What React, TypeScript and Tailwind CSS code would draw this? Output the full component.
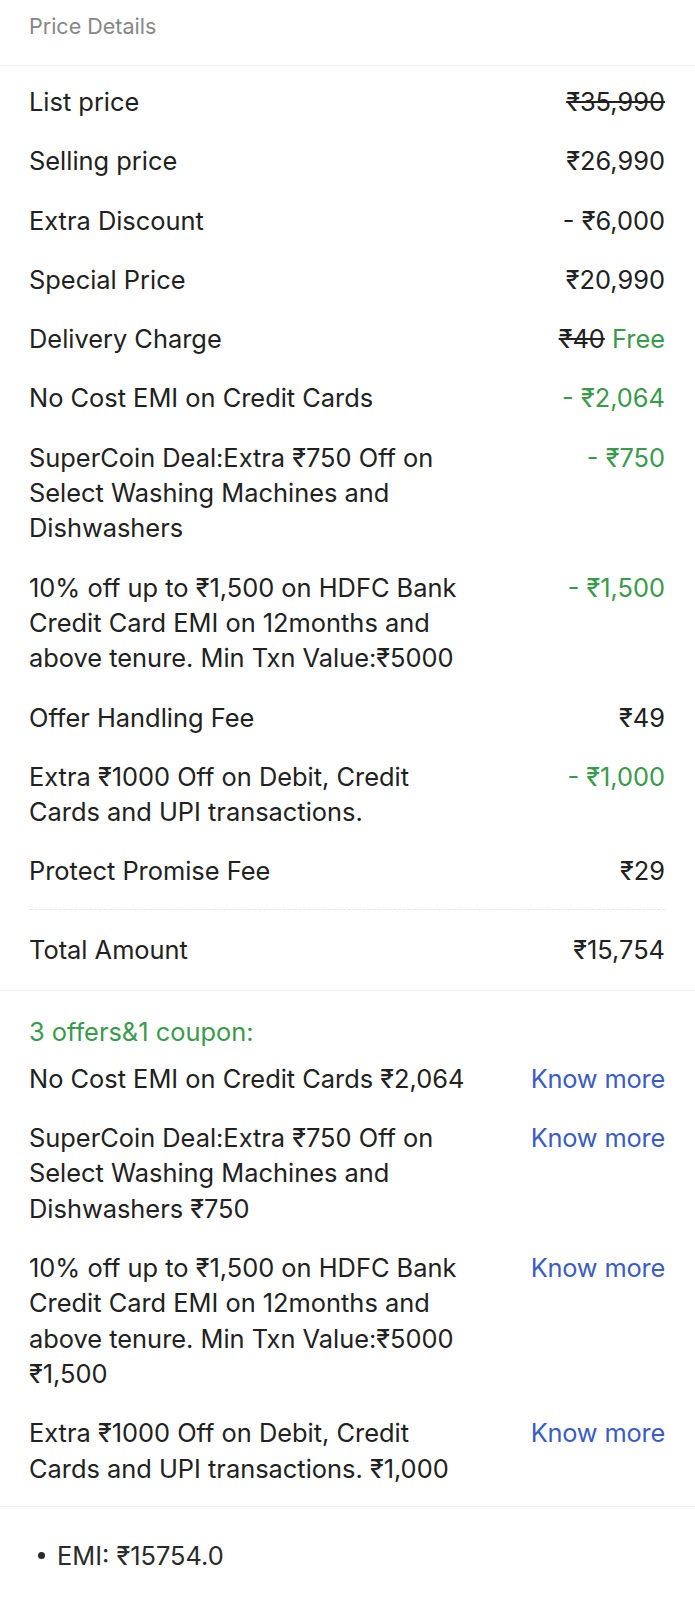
import React from "react";

type Row = { label: string; value: React.ReactNode };

const G = "text-[#3a9a4c]";

const rows: Row[] = [
  { label: "List price", value: <span className="line-through">₹35,990</span> },
  { label: "Selling price", value: "₹26,990" },
  { label: "Extra Discount", value: "- ₹6,000" },
  { label: "Special Price", value: "₹20,990" },
  {
    label: "Delivery Charge",
    value: (
      <span>
        <span className="line-through">₹40</span> <span className={G}>Free</span>
      </span>
    ),
  },
  { label: "No Cost EMI on Credit Cards", value: <span className={G}>- ₹2,064</span> },
  {
    label: "SuperCoin Deal:Extra ₹750 Off on Select Washing Machines and Dishwashers",
    value: <span className={G}>- ₹750</span>,
  },
  {
    label: "10% off up to ₹1,500 on HDFC Bank Credit Card EMI on 12months and above tenure. Min Txn Value:₹5000",
    value: <span className={G}>- ₹1,500</span>,
  },
  { label: "Offer Handling Fee", value: "₹49" },
  {
    label: "Extra ₹1000 Off on Debit, Credit Cards and UPI transactions.",
    value: <span className={G}>- ₹1,000</span>,
  },
  { label: "Protect Promise Fee", value: "₹29" },
];

const offers = [
  "No Cost EMI on Credit Cards ₹2,064",
  "SuperCoin Deal:Extra ₹750 Off on Select Washing Machines and Dishwashers ₹750",
  "10% off up to ₹1,500 on HDFC Bank Credit Card EMI on 12months and above tenure. Min Txn Value:₹5000 ₹1,500",
  "Extra ₹1000 Off on Debit, Credit Cards and UPI transactions. ₹1,000",
];

export default function App() {
  return (
    <div className="w-[695px] min-h-[1600px] bg-white font-['Inter','Noto_Sans',sans-serif] text-[#212121]">
      <div className="h-[66px] border-b border-[#f0f0f0] pl-[29px] pr-[30px] pt-[11px]">
        <span className="text-[21.5px] leading-[30px] text-[#878787]">Price Details</span>
      </div>

      <div className="border-b border-[#f0f0f0] pl-[29px] pr-[30px] pt-[18px] pb-[22px] text-[25.4px] leading-[35.3px]">
        <div className="flex flex-col gap-[24px]">
          {rows.map((r, i) => (
            <div key={i} className="flex justify-between">
              <div className="max-w-[70%]">{r.label}</div>
              <div className="text-right whitespace-nowrap">{r.value}</div>
            </div>
          ))}
        </div>
        <div className="mt-[20px] border-t border-dashed border-[#e6e6e6] pt-[22.5px] flex justify-between">
          <div>Total Amount</div>
          <div>₹15,754</div>
        </div>
      </div>

      <div className="border-b border-[#f0f0f0] pl-[29px] pr-[30px] pt-[23.5px] pb-[20.5px] text-[25.4px] leading-[35.3px]">
        <div className={G}>3 offers&amp;1 coupon:</div>
        <div className="mt-[11.5px] flex flex-col gap-[24px]">
          {offers.map((o, i) => (
            <div key={i} className="flex justify-between">
              <div className="max-w-[70%]">{o}</div>
              <div className="whitespace-nowrap tracking-[-0.2px] text-[#3a5cc4]">Know more</div>
            </div>
          ))}
        </div>
      </div>

      <div className="pl-[29px] pr-[30px] pt-[31px]">
        <div className="flex items-center text-[25.4px] leading-[35.3px] text-[#2a2a2a]">
          <span className="ml-[9px] mr-[12px] inline-block h-[7px] w-[7px] rounded-full bg-[#2a2a2a]" />
          <span>EMI: ₹15754.0</span>
        </div>
      </div>
    </div>
  );
}
